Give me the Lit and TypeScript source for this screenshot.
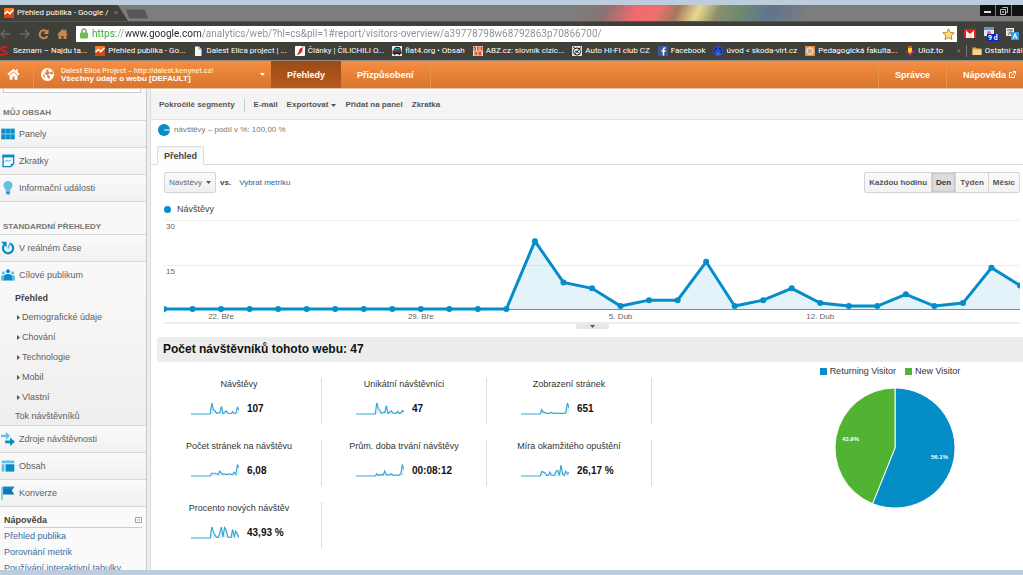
import { LitElement, html, svg, css } from "lit";
import { customElement, property, state } from "lit/decorators.js";
import { classMap } from "lit/directives/class-map.js";

const VISITS = [0, 0, 0, 0, 0, 0, 0, 0, 0, 0, 0, 0, 0, 23, 9, 7, 1, 3, 3, 16, 1, 3, 7, 2, 1, 1, 5, 1, 2, 14, 8];
const ZEROS = [0, 0, 0, 0, 0, 0, 0, 0, 0, 0, 0, 0];

const base = css`
  *,
  *::before,
  *::after {
    box-sizing: border-box;
  }
  a {
    color: inherit;
    text-decoration: none;
  }
  button,
  input,
  select {
    font: inherit;
    color: inherit;
    margin: 0;
    padding: 0;
    border: 0;
    background: none;
    border-radius: 0;
  }
  svg {
    display: block;
    flex: none;
  }
`;

const ICONS: Record<string, unknown> = {
  analytics: svg`<rect width="20" height="20" rx="1" fill="#f47a1f"/><path d="M0 12 6 7l5 4 9-8v17H0z" fill="#d8480f"/><path d="M1 12.500 6.500 7l5 4.500L19 4" fill="none" stroke="#fff" stroke-width="3"/>`,
  seznam: svg`<path d="M14 2C7 2 2 3 2 6s10 3 11 7-5 4-13 5" fill="none" stroke="#e01818" stroke-width="4"/>`,
  file: svg`<path d="M4 1h8l5 5v14H4z" fill="#f4f4f4"/><path d="M12 1v5h5" fill="none" stroke="#888" stroke-width="1.500"/>`,
  chili: svg`<rect width="20" height="20" rx="2" fill="#fff"/><path d="M15 4c1 8-4 13-12 14 5-4 4-9 8-14z" fill="#d9202a"/><path d="M13 5c1-3 3-3 4-4" fill="none" stroke="#3c8a2e" stroke-width="2"/>`,
  car: svg`<rect width="20" height="20" fill="#e8e8e8"/><path d="M4 8 7 3h8l2 5z" fill="#1bb5bd" stroke="#222" stroke-width="2"/><path d="M1 9h18v7h-3v2h-3v-2H7v2H4v-2H1z" fill="#222"/><path d="M3 11h4v2H3zm10 0h4v2h-4z" fill="#e0204a"/><path d="M7 10h6v3H7z" fill="#b3123a"/>`,
  abz: svg`<rect width="20" height="20" fill="#f9dccb"/><path d="M1 1h5v8H1zm7 0h5v8H8zm7 0h4v8h-4zM3 11h6v8H3zm8 0h6v8h-6z" fill="#e5471b"/><path d="M3 4h1v3H3zm7-1h1v4h-1zM5 13h2v1H5zm0 3h2v1H5z" fill="#fff"/>`,
  hifi: svg`<rect width="20" height="20" fill="#ddd"/><circle cx="10" cy="11" r="7" fill="#fff" stroke="#222" stroke-width="2"/><path d="M2 2l6 4M18 3l-6 4M6 11h3M13 8l-2 3 3 4M6 15l3-2" stroke="#222" stroke-width="2" fill="none"/><circle cx="10" cy="11" r="2" fill="#222"/>`,
  facebook: svg`<rect width="20" height="20" fill="#3b5998"/><path d="M15 4h-2c-1.500 0-2 .8-2 2v13M7 10h8" fill="none" stroke="#fff" stroke-width="3"/>`,
  skoda: svg`<circle cx="10" cy="10" r="9" fill="#0c1e8c" stroke="#3558e8" stroke-width="2"/><path d="M10 2v15M6 7v6c0 2 8 2 8 0V7M4 16h12" fill="none" stroke="#4d78ff" stroke-width="2"/>`,
  pedag: svg`<rect width="20" height="20" fill="#e68a45"/><circle cx="10" cy="10" r="7.500" fill="#f2e4d4"/><path d="M5 8h10M5 12h10M8 5v10M12 5v10" stroke="#b7875d" stroke-width="1.500"/>`,
  uloz: svg`<path d="M10 3 19 11 10 20 1 11z" fill="#a01868"/><path d="M6 1h8v9h5l-9 9-9-9h5z" fill="#ffc928"/><path d="M6 1h8v3H6z" fill="#f0482c"/><path d="M1 10h4l5 6 5-6h4l-9 9z" fill="#a01868"/>`,
  folder: svg`<path d="M1 3h7l2 2h9v13H1z" fill="#d9a649"/><path d="M1 7h18v11H1z" fill="#f5d48a"/>`,
  home: svg`<path d="M1.500 10.500 10 3l8.500 7.500" fill="none" stroke="currentColor" stroke-width="3"/><path d="M4 11.500 10 6.500l6 5V18h-4.500v-5h-3v5H4zM14 2h2.500v5L14 5z" fill="currentColor"/>`,
  globe: svg`<circle cx="10" cy="10" r="10" fill="#fff"/><path d="M8 3l4-1-1 3 3 2 3-2 2 4-3 1-3-2-2 2 3 3-1 4-3-2-1-4-4-3 3-2z" fill="#e98140"/><path d="M3 9l3 3v4l-2-2z" fill="#e98140"/>`,
  panels: svg`<path d="M0 2h20v16H0z" fill="#62c2e2"/><path d="M1 3h5v6H1zm6.500 0h5v6h-5zM14 3h5v6h-5zM1 11h5v6H1zm6.500 0h5v6h-5zM14 11h5v6h-5z" fill="#058dc7"/>`,
  shortcut: svg`<path d="M3 2h15v12l-4 4H3z" fill="#fff" stroke="#0a8fc9" stroke-width="2"/><path d="M2 1h17v4H2z" fill="#0a8fc9"/><path d="M5 12l3-3 3 1.500L15 8" fill="none" stroke="#62c2e2" stroke-width="1.600"/><path d="M18 14h-4v4z" fill="#0a8fc9"/>`,
  bulb: svg`<path d="M10 0c4 0 6.500 3 6.500 6 0 3-3 4.500-3.500 8H7C6.500 10.500 3.500 9 3.500 6 3.500 3 6 0 10 0z" fill="#62c2e2"/><path d="M7 14.500h6v3L10.500 20 7 17.500z" fill="#2a97cb"/>`,
  realtime: svg`<path d="M13 3.500a7.300 7.300 0 1 1-8 1.500" fill="none" stroke="#058dc7" stroke-width="3.200"/><path d="M0 1h8v8z" fill="#058dc7"/><path d="M10 11l3-9" stroke="#62c2e2" stroke-width="2.400"/>`,
  audience: svg`<circle cx="3.500" cy="7" r="2.300" fill="#62c2e2"/><circle cx="16.500" cy="7" r="2.300" fill="#62c2e2"/><path d="M0 18v-6l2-2h4v8zm20 0v-6l-2-2h-4v8z" fill="#62c2e2"/><circle cx="10" cy="4.500" r="2.800" fill="#058dc7"/><path d="M4 18v-5l3-4.500h6l3 4.500v5z" fill="#058dc7"/>`,
  sources: svg`<path d="M0 4h7V0l6 5.500L7 11V7H0z" fill="#62c2e2"/><path d="M6 12h7V8l7 6-7 6v-4H6z" fill="#058dc7"/>`,
  content: svg`<path d="M1 2h18v4H1zM1 7.500h4V18H1z" fill="#62c2e2"/><path d="M6.500 7.500H19V18H6.500z" fill="#058dc7"/>`,
  flag: svg`<path d="M1.500 1v19" stroke="#62c2e2" stroke-width="2"/><path d="M3 1h16l-3.500 5.500L19 12H3z" fill="#1273b5"/><path d="M3 1h16l-3.500 4H3z" fill="#058dc7"/>`,
};

@customElement("ui-icon")
class UiIcon extends LitElement {
  static styles = css`
    :host {
      display: block;
      flex: none;
      width: 10px;
      height: 10px;
    }
    svg {
      display: block;
      width: 100%;
      height: 100%;
    }
  `;
  @property() name = "file";
  render() {
    return html`<svg viewBox="0 0 20 20" aria-hidden="true">${ICONS[this.name]}</svg>`;
  }
}

const BOOKMARKS = [
  ["seznam", "Seznam – Najdu ta..."],
  ["analytics", "Přehled publika - Go..."],
  ["file", "Dalest Elica project | ..."],
  ["chili", "Články | ČILICHILI O..."],
  ["car", "flat4.org • Obsah"],
  ["abz", "ABZ.cz: slovník cizíc..."],
  ["hifi", "Auto HI-FI club CZ"],
  ["facebook", "Facebook"],
  ["skoda", "úvod < skoda-virt.cz"],
  ["pedag", "Pedagogická fakulta..."],
  ["uloz", "Ulož.to"],
];

@customElement("browser-chrome")
class BrowserChrome extends LitElement {
  static styles = [
    base,
    css`
      :host {
        display: block;
        font: 8px/12px Roboto, "Open Sans", sans-serif;
        color: #fff;
        background: #3f403a;
        border-bottom: 1px solid #8d8e8a;
      }
      .strip {
        display: flex;
        height: 17px;
        background: linear-gradient(
            115deg,
            transparent 56%,
            #8a7272 59%,
            #f06a6e 62%,
            #f0706e 64%,
            #a5785f 66%,
            #e8d890 68%,
            #8b8f6a 70%,
            #6f8a70 72%,
            #60748c 75%,
            transparent 79%
          )
          no-repeat #7d7d7d;
        border-bottom: 1px solid #55564f;
      }
      .tab {
        display: flex;
        align-items: center;
        gap: 3px;
        width: 128px;
        padding: 0 10px 0 4px;
        background: #3f403a;
        clip-path: polygon(0 0, 118px 0, 128px 100%, 0 100%);
      }
      .tab-title {
        flex: 1;
        overflow: hidden;
        white-space: nowrap;
        text-align: left;
      }
      .x {
        color: #85867f;
      }
      .newtab {
        width: 20px;
        height: 10px;
        margin: 4px 0 0 -1px;
        background: #575757;
        border: 1px solid #6a6a6a;
        border-radius: 2px;
        transform: skewX(20deg);
      }
      .win {
        display: flex;
        gap: 1px;
        margin-left: auto;
        height: 11px;
      }
      .win button {
        display: grid;
        place-items: center;
        width: 15px;
        height: 11px;
        background: #111;
      }
      .win button:last-child {
        width: 11px;
      }
      .bar {
        display: flex;
        align-items: center;
        gap: 7px;
        height: 21px;
        padding: 3px 4px 1px 0;
      }
      .nav {
        display: flex;
        align-items: center;
        gap: 8px;
        padding: 0 1px 0 0;
      }
      .nav button {
        display: block;
        width: 11px;
        height: 12px;
      }
      .omni {
        display: flex;
        flex: 1;
        align-items: center;
        gap: 4px;
        height: 16px;
        padding: 0 2px 0 4px;
        background: #fff;
      }
      .url {
        flex: 1;
        min-width: 0;
        height: 16px;
        font-size: 10px;
        line-height: 16px;
        color: transparent;
        background: linear-gradient(90deg, #2ba52b 24px, #999 24px 34px, #222 34px 110px, #8c8c8c 110px);
        -webkit-background-clip: text;
        background-clip: text;
      }
      .bookmarks {
        display: flex;
        align-items: center;
        height: 17px;
        padding-bottom: 1px;
        overflow: hidden;
        white-space: nowrap;
      }
      .bookmarks a {
        display: flex;
        align-items: center;
        gap: 3px;
        flex: none;
        margin-right: 8px;
      }
      .tail {
        display: flex;
        align-items: center;
        gap: 5px;
        margin-left: auto;
        width: 66px;
        flex: none;
      }
      .tail a {
        padding-left: 5px;
        border-left: 1px solid #77786f;
        margin: 0;
      }
      .more {
        color: #8e8f88;
      }
    `,
  ];
  render() {
    return html`
      <div class="strip">
        <button class="tab">
          <ui-icon name="analytics"></ui-icon>
          <span class="tab-title">Přehled publika - Google /</span>
          <span class="x">×</span>
        </button>
        <button class="newtab" aria-label="Nová karta"></button>
        <div class="win">
          <button aria-label="Minimalizovat"><svg width="7" height="7"><path d="M0 4h7v2H0z" fill="#ddd" /></svg></button>
          <button aria-label="Obnovit">
            <svg width="8" height="8" viewBox="0 0 8 8"><path d="M2.500.5h5v5h-2M.5 2.500h5v5h-5zM2.500 4.500h1v1h-1z" fill="none" stroke="#bbb" /></svg>
          </button>
          <button aria-label="Zavřít"></button>
        </div>
      </div>
      <div class="bar">
        <div class="nav">
          <button aria-label="Zpět"><svg width="11" height="12" viewBox="0 0 11 12"><path d="M10 6H1M5 2 1 6l4 4" fill="none" stroke="#686963" stroke-width="1.500" /></svg></button>
          <button aria-label="Vpřed"><svg width="11" height="12" viewBox="0 0 11 12"><path d="M1 6h9M6 2l4 4-4 4" fill="none" stroke="#686963" stroke-width="1.500" /></svg></button>
          <button aria-label="Obnovit"><svg width="11" height="12" viewBox="0 0 11 12"><path d="M8.500 3.500A4 4 0 1 0 9.300 8" fill="none" stroke="#d0854d" stroke-width="2" /><path d="M10.500 1v5h-5z" fill="#d0854d" /></svg></button>
          <button aria-label="Domů"><svg width="11" height="12" viewBox="0 0 11 12"><path d="M0 6.500 5.500 1l2 2V1.500h1.800v3.300L11 6.500H9.500V11h-3V8h-2v3h-3V6.500z" fill="#d0854d" /></svg></button>
        </div>
        <div class="omni">
          <svg width="8" height="11" viewBox="0 0 8 11"><path d="M2 5V3a2 2 0 0 1 4 0v2" fill="none" stroke="#8b8f8b" stroke-width="1.400" /><rect y="4.500" width="8" height="6" rx="1" fill="#6cc04a" /></svg>
          <input class="url" aria-label="Adresa" value="https://www.google.com/analytics/web/?hl=cs&pli=1#report/visitors-overview/a39778798w68792863p70866700/" />
          <svg width="13" height="12" viewBox="0 0 13 12"><path d="m6.500.8 1.700 3.600 4 .5-3 2.700.8 3.900-3.500-2-3.500 2 .8-3.900-3-2.700 4-.5z" fill="#fbe07a" stroke="#b58d3a" /></svg>
        </div>
        <svg width="12" height="9" viewBox="0 0 12 9"><rect width="12" height="9" fill="#e02020" /><path d="M2 9V1.500L6 5l4-3.500V9z" fill="#fff" /><path d="M3.500 9V4.500L6 6.500l2.500-2V9z" fill="#e02020" opacity=".15" /></svg>
        <svg width="16" height="14" viewBox="0 0 16 14"><path d="M1 1h10v8H1z" fill="#dce8f6" /><path d="M1 0h10v3H1z" fill="#6a94c8" /><circle cx="6" cy="6" r="2" fill="#e26a6a" /><rect x="4" y="7" width="12" height="7" fill="#1420b8" /><text x="5" y="13" font-size="7" font-weight="700" fill="#fff">9 d</text></svg>
        <svg width="13" height="12" viewBox="0 0 13 12"><rect width="8" height="8" fill="#e9ece9" /><path d="M1 2h6M4 1v1M2 7l4-5M2.500 4 6 7" stroke="#666" fill="none" /><rect x="5" y="4" width="8" height="8" fill="#2f9be0" /><path d="m7 11 2-5.500L11 11M8 9h2" fill="none" stroke="#fff" /></svg>
      </div>
      <nav class="bookmarks">
        ${BOOKMARKS.map(([i, t]) => html`<a href="#"><ui-icon name=${i}></ui-icon>${t}</a>`)}
        <div class="tail"><span class="more">»</span><a href="#"><ui-icon name="folder"></ui-icon>Ostatní zál</a></div>
      </nav>
    `;
  }
}

@customElement("ga-header")
class GaHeader extends LitElement {
  static styles = [
    base,
    css`
      :host {
        display: flex;
        height: 27px;
        flex: none;
        color: #fff;
        font: bold 9px/12px "Liberation Sans", Arial, sans-serif;
        background: linear-gradient(#f68d42, #d8752f);
        border-bottom: 1px solid #e9c3a6;
      }
      a,
      button {
        display: flex;
        align-items: center;
        justify-content: center;
      }
      .home {
        width: 34px;
        padding-right: 7px;
        border-right: 1px solid #ea914f;
      }
      .home ui-icon {
        width: 13px;
        height: 13px;
      }
      .profile {
        width: 237px;
        gap: 7px;
        padding: 0 6px 0 7px;
        text-align: left;
      }
      .profile ui-icon {
        width: 13px;
        height: 13px;
      }
      .names {
        flex: 1;
        font-size: 8px;
        line-height: 8px;
      }
      .names small {
        display: block;
        font-size: 7px;
        line-height: 8px;
        color: #ffe6b8;
      }
      .item {
        padding: 0 16px;
        border-right: 1px solid #ea914f;
      }
      .active {
        background: linear-gradient(#9c4a14, #b85a1e);
        border-right: 0;
      }
      .right {
        margin-left: auto;
        border-left: 1px solid #ea914f;
        border-right: 0;
      }
      .help {
        gap: 3px;
        padding: 0 7px 0 16px;
        border-left: 1px solid #ea914f;
        border-right: 0;
      }
    `,
  ];
  render() {
    return html`
      <a class="home" href="#" aria-label="Domů"><ui-icon name="home"></ui-icon></a>
      <button class="profile">
        <ui-icon name="globe"></ui-icon>
        <span class="names"><small>Dalest Elica Project – http://dalest.kenynet.cz/</small>Všechny údaje o webu [DEFAULT]</span>
        <svg width="5" height="3"><path d="M0 0h5L2.500 3z" fill="#fff" /></svg>
      </button>
      <a class="item active" href="#">Přehledy</a>
      <a class="item" href="#">Přizpůsobení</a>
      <a class="item right" href="#">Správce</a>
      <a class="help" href="#">Nápověda<svg width="7" height="7" viewBox="0 0 7 7"><path d="M3 1.500H.5v5h5V4M2.500 4.500l3.500-4M4 .5h2.500V3" fill="none" stroke="#fff" /></svg></a>
    `;
  }
}

@customElement("ga-sidebar")
class GaSidebar extends LitElement {
  static styles = [
    base,
    css`
      :host {
        display: block;
        overflow: hidden;
        color: #606060;
        background: #f8f8f8;
        font: 9px/12px "Liberation Sans", Arial, sans-serif;
        white-space: nowrap;
      }
      .search {
        display: flex;
        align-items: flex-end;
        height: 4px;
        padding: 0 5px 0 3px;
        overflow: hidden;
      }
      .search input {
        width: 100%;
        height: 18px;
        flex: none;
        background: #fff;
        border: 1px solid #ccc;
      }
      h2 {
        margin: 0;
        padding: 13px 3px 1px;
        font-size: 8px;
        line-height: 13px;
        font-weight: bold;
        color: #777;
      }
      h2.second {
        padding-top: 18px;
        border-top: 1px solid #d8d8d8;
      }
      .row {
        display: flex;
        align-items: center;
        gap: 4px;
        height: 27px;
        padding-left: 1px;
        border-top: 1px solid #d8d8d8;
        background: linear-gradient(#fafafa, #f1f1f1);
      }
      .row.open {
        background: #f8f8f8;
      }
      .row ui-icon {
        width: 14px;
        height: 14px;
      }
      .sub {
        display: flex;
        flex-direction: column;
        padding-top: 1px;
        background: linear-gradient(#f8f8f8, #eee);
      }
      .sub a {
        line-height: 20px;
      }
      .sub .leaf {
        line-height: 18px;
        padding-left: 15px;
      }
      .sub .branch {
        display: flex;
        align-items: center;
        gap: 2px;
        padding-left: 17px;
      }
      .current {
        font-weight: bold;
        color: #444;
      }
      .help {
        padding: 7px 4px 0;
        border-top: 1px solid #d8d8d8;
        background: #fafafa;
        color: #3b6e9e;
        display: flex;
        flex-direction: column;
        line-height: 16px;
      }
      .help h3 {
        display: flex;
        justify-content: space-between;
        align-items: center;
        margin: 0;
        padding-bottom: 1px;
        font-size: 9px;
        line-height: 12px;
        color: #444;
        border-bottom: 1px solid #ccc;
      }
    `,
  ];
  row(icon: string, text: string, open = false) {
    return html`<a href="#" class=${classMap({ row: true, open })}><ui-icon name=${icon}></ui-icon>${text}</a>`;
  }
  render() {
    return html`
      <div class="search"><input type="search" aria-label="Najít přehledy" /></div>
      <h2>MŮJ OBSAH</h2>
      ${this.row("panels", "Panely")} ${this.row("shortcut", "Zkratky")} ${this.row("bulb", "Informační události")}
      <h2 class="second">STANDARDNÍ PŘEHLEDY</h2>
      ${this.row("realtime", "V reálném čase")} ${this.row("audience", "Cílové publikum", true)}
      <div class="sub">
        <a class="leaf current" href="#">Přehled</a>
        ${["Demografické údaje", "Chování", "Technologie", "Mobil", "Vlastní"].map(
          (t) => html`<a class="branch" href="#"><svg width="3" height="5"><path d="M0 0 3 2.500 0 5z" fill="#555" /></svg>${t}</a>`
        )}
        <a class="leaf" href="#">Tok návštěvníků</a>
      </div>
      ${this.row("sources", "Zdroje návštěvnosti")} ${this.row("content", "Obsah")} ${this.row("flag", "Konverze")}
      <div class="help">
        <h3>Nápověda<svg width="7" height="6"><path d="M.5.5h6v5h-6z" fill="#fff" stroke="#9aa5b1" /><path d="M2 3h3" stroke="#9aa5b1" /></svg></h3>
        <a href="#">Přehled publika</a>
        <a href="#">Porovnání metrik</a>
        <a href="#">Používání interaktivní tabulky</a>
      </div>
    `;
  }
}

@customElement("visits-chart")
class VisitsChart extends LitElement {
  static styles = [
    base,
    css`
      :host {
        display: block;
        color: #666;
        font: 8px/12px "Liberation Sans", Arial, sans-serif;
      }
      .plot {
        display: grid;
        grid-template-rows: 45px 44px 3px;
      }
      .plot > * {
        grid-column: 1;
      }
      .tick {
        border-top: 1px solid #eee;
        padding-left: 2px;
      }
      .r1 {
        grid-row: 1;
      }
      .r2 {
        grid-row: 2;
      }
      .lines {
        grid-row: 1 / 4;
        width: 100%;
        height: 92px;
      }
      .dates {
        display: grid;
        grid-template-columns: repeat(60, 1fr);
        height: 10px;
        line-height: 10px;
      }
      .dates span {
        display: flex;
        justify-content: center;
        white-space: nowrap;
        grid-row: 1;
      }
      .d1 {
        grid-column: 4 / 6;
      }
      .d2 {
        grid-column: 18 / 20;
      }
      .d3 {
        grid-column: 32 / 34;
      }
      .d4 {
        grid-column: 46 / 48;
      }
      .foot {
        display: flex;
        justify-content: center;
        border-top: 2px solid #ececec;
      }
      .handle {
        display: grid;
        place-items: center;
        width: 33px;
        height: 5px;
        background: #e6e6e6;
        border-radius: 0 0 2px 2px;
      }
      .area {
        fill: #058dc7;
        fill-opacity: 0.11;
      }
      .line {
        fill: none;
        stroke: #058dc7;
        stroke-width: 3px;
      }
      .dot {
        stroke: #058dc7;
        stroke-width: 6px;
        stroke-linecap: round;
      }
      .axis {
        stroke: #888;
      }
    `,
  ];
  render() {
    const pts = VISITS.map((v, i) => [(i * 100) / (VISITS.length - 1), 89 - v * 2.95]);
    const line = pts.map((p) => p.join(",")).join(" ");
    return html`
      <div class="plot">
        <div class="tick r1">30</div>
        <div class="tick r2">15</div>
        <svg class="lines" viewBox="0 0 100 92" preserveAspectRatio="none" role="img" aria-label="Návštěvy">
          <polygon class="area" points="0,89 ${line} 100,89" />
          <path class="axis" d="M0 89.500H100" vector-effect="non-scaling-stroke" />
          <polyline class="line" points=${line} vector-effect="non-scaling-stroke" />
          ${pts.map((p) => svg`<path class="dot" d="M${p[0]} ${p[1]}h0.001" vector-effect="non-scaling-stroke"/>`)}
        </svg>
      </div>
      <div class="dates">
        <span class="d1">22. Bře</span><span class="d2">29. Bře</span><span class="d3">5. Dub</span><span class="d4">12. Dub</span>
      </div>
      <div class="foot">
        <button class="handle" aria-label="Poznámky"><svg width="5" height="3"><path d="M0 0h5L2.500 3z" fill="#555" /></svg></button>
      </div>
    `;
  }
}

const METRICS: { label: string; value: string; data: number[] }[] = [
  { label: "Návštěvy", value: "107", data: VISITS },
  { label: "Unikátní návštěvníci", value: "47", data: [...ZEROS, 0, 20, 9, 6, 1, 3, 3, 15, 1, 3, 6, 2, 1, 1, 5, 1, 2, 6, 4] },
  { label: "Zobrazení stránek", value: "651", data: [...ZEROS, 0, 8, 3, 3, 1, 1, 1, 3, 1, 1, 2, 1, 1, 1, 1, 1, 3, 20, 11] },
  { label: "Počet stránek na návštěvu", value: "6,08", data: [...ZEROS, 0, 5, 5, 5, 4, 3, 9, 5, 3, 4, 3, 3, 4, 3, 3, 7, 3, 20, 15] },
  { label: "Prům. doba trvání návštěvy", value: "00:08:12", data: [...ZEROS, 0, 4, 1, 2, 3, 2, 9, 2, 2, 2, 4, 2, 1, 2, 1, 2, 4, 20, 12] },
  { label: "Míra okamžitého opuštění", value: "26,17 %", data: [...ZEROS, 0, 8, 7, 6, 1, 1, 7, 2, 1, 2, 9, 10, 1, 20, 4, 1, 9, 4, 7] },
  { label: "Procento nových návštěv", value: "43,93 %", data: [...ZEROS, 0, 19, 11, 5, 1, 1, 9, 19, 2, 18, 14, 2, 1, 1, 15, 3, 12, 7, 1] },
];

@customElement("metric-card")
class MetricCard extends LitElement {
  static styles = [
    base,
    css`
      :host {
        display: flex;
        flex-direction: column;
        align-items: stretch;
        height: 46px;
        border-right: 1px solid #ddd;
        color: #333;
        font: 9px/12px "Liberation Sans", Arial, sans-serif;
      }
      .label {
        text-align: center;
      }
      .data {
        display: flex;
        align-items: center;
        gap: 8px;
        padding: 12px 0 0 34px;
      }
      b {
        font-size: 10px;
        line-height: 12px;
        color: #111;
      }
    `,
  ];
  @property() label = "";
  @property() value = "";
  @property({ attribute: false }) data: number[] = [];
  render() {
    const max = Math.max(...this.data);
    const line = this.data.map((v, i) => `${(i * 48) / 30},${12 - (v / max) * 11}`).join(" ");
    return html`
      <span class="label">${this.label}</span>
      <div class="data">
        <svg width="48" height="13" aria-hidden="true">
          <polygon points="0,12 ${line} 48,12" fill="#dff0f9" />
          <polyline points=${line} fill="none" stroke="#3aa6d4" stroke-width="1.200" />
        </svg>
        <b>${this.value}</b>
      </div>
    `;
  }
}

@customElement("visitor-pie")
class VisitorPie extends LitElement {
  static styles = [
    base,
    css`
      :host {
        display: flex;
        flex-direction: column;
        align-items: center;
        gap: 10px;
        color: #333;
        font: 9px/12px "Liberation Sans", Arial, sans-serif;
      }
      .legend {
        display: flex;
        gap: 9px;
        padding-right: 10px;
      }
      .legend span {
        display: flex;
        align-items: center;
        gap: 3px;
      }
      .legend i {
        width: 7px;
        height: 7px;
      }
      .blue {
        background: #058dc7;
      }
      .green {
        background: #50b432;
      }
    `,
  ];
  render() {
    const a = 0.561 * 2 * Math.PI;
    const x = 61 + 60 * Math.sin(a);
    const y = 61 - 60 * Math.cos(a);
    return html`
      <div class="legend">
        <span><i class="blue"></i>Returning Visitor</span><span><i class="green"></i>New Visitor</span>
      </div>
      <svg width="122" height="122" role="img" aria-label="Returning Visitor, New Visitor">
        <path d="M61 61V1A60 60 0 1 1 ${x} ${y}z" fill="#058dc7" stroke="#fff" />
        <path d="M61 61 ${x} ${y}A60 60 0 0 1 61 1z" fill="#50b432" stroke="#fff" />
        <text x="97" y="72" font-size="6" font-weight="700" fill="#fff">56.1%</text>
        <text x="8" y="54" font-size="6" font-weight="700" fill="#fff">43.9%</text>
      </svg>
    `;
  }
}

@customElement("ga-report")
class GaReport extends LitElement {
  static styles = [
    base,
    css`
      :host {
        display: block;
        min-width: 0;
        overflow: hidden;
        background: #fff;
        color: #444;
        font: 8px/12px "Liberation Sans", Arial, sans-serif;
      }
      .tools {
        display: flex;
        align-items: center;
        gap: 9px;
        height: 31px;
        padding: 0 8px;
        font-weight: bold;
        color: #555;
        background: #f4f4f4;
        border-top: 2px solid #fff;
        border-bottom: 1px solid #e2e2e2;
      }
      .tools .export {
        display: flex;
        align-items: center;
        gap: 3px;
      }
      .sep {
        width: 1px;
        height: 13px;
        background: #ccc;
      }
      .share {
        display: flex;
        align-items: center;
        gap: 4px;
        height: 20px;
        padding-left: 7px;
        color: #777;
      }
      .tabs {
        display: flex;
        padding: 6px 6px 0;
        border-bottom: 1px solid #dcdcdc;
      }
      .tab {
        height: 19px;
        margin-bottom: -1px;
        padding: 0 6px;
        font-size: 9px;
        font-weight: bold;
        background: linear-gradient(#f4f4f4, #fff);
        border: 1px solid #dcdcdc;
        border-bottom-color: #fff;
        border-radius: 2px 2px 0 0;
      }
      .controls {
        display: flex;
        align-items: center;
        gap: 4px;
        padding: 7px 3px 0 13px;
      }
      .pick {
        display: grid;
        align-items: center;
        justify-items: end;
      }
      .pick > * {
        grid-area: 1 / 1;
      }
      .pick svg {
        margin-right: 5px;
        pointer-events: none;
      }
      select {
        appearance: none;
        width: 52px;
        height: 21px;
        padding-left: 4px;
        border: 1px solid #d4d4d4;
        border-radius: 2px;
        background: linear-gradient(#fafafa, #f0f0f0);
        color: #666;
      }
      .vs {
        font-weight: bold;
      }
      .metric {
        margin-left: 4px;
        color: #1a6aa8;
      }
      .range {
        display: flex;
        margin-left: auto;
        border: 1px solid #d4d4d4;
        border-radius: 2px;
        background: linear-gradient(#fafafa, #f2f2f2);
      }
      .range button {
        height: 19px;
        padding: 0 4px;
        font-weight: bold;
        color: #555;
        border-left: 1px solid #d4d4d4;
      }
      .range button:first-child {
        border-left: 0;
      }
      .range .on {
        background: #ddd;
        color: #333;
        box-shadow: inset 0 0 2px #999;
      }
      .legend {
        display: flex;
        align-items: center;
        gap: 6px;
        padding: 10px 13px 5px;
        font-size: 9px;
      }
      .legend i {
        width: 7px;
        height: 7px;
        border-radius: 50%;
        background: #058dc7;
      }
      visits-chart {
        margin: 0 3px 0 13px;
      }
      h1 {
        margin: 8px 0 0 6px;
        padding: 0 6px;
        font-size: 12px;
        line-height: 25px;
        color: #111;
        background: #ededed;
        border-radius: 3px 0 0 3px;
      }
      .summary {
        display: flex;
        justify-content: space-between;
        align-items: flex-start;
        padding: 3px 0 0 6px;
      }
      .cards {
        display: grid;
        grid-template-columns: repeat(3, 165px);
        gap: 16px 0;
        padding-top: 13px;
      }
      visitor-pie {
        width: 256px;
      }
    `,
  ];
  @state() range = "Den";
  render() {
    return html`
      <div class="tools">
        <a href="#">Pokročilé segmenty</a><span class="sep"></span><a href="#">E-mail</a>
        <a class="export" href="#">Exportovat<svg width="5" height="3"><path d="M0 0h5L2.500 3z" fill="#555" /></svg></a>
        <a href="#">Přidat na panel</a><a href="#">Zkratka</a>
      </div>
      <div class="share">
        <svg width="12" height="12"><circle cx="6" cy="6" r="6" fill="#058dc7" /><path d="M6 6h6" stroke="#fff" /></svg>
        návštěvy – podíl v %: 100,00 %
      </div>
      <div class="tabs"><button class="tab">Přehled</button></div>
      <div class="controls">
        <span class="pick">
          <select aria-label="Metrika"><option>Návštěvy</option></select>
          <svg width="5" height="3"><path d="M0 0h5L2.500 3z" fill="#555" /></svg>
        </span>
        <span class="vs">vs.</span>
        <a class="metric" href="#">Vybrat metriku</a>
        <div class="range">
          ${["Každou hodinu", "Den", "Týden", "Měsíc"].map(
            (r) => html`<button class=${classMap({ on: r === this.range })} @click=${() => (this.range = r)}>${r}</button>`
          )}
        </div>
      </div>
      <div class="legend"><i></i>Návštěvy</div>
      <visits-chart></visits-chart>
      <h1>Počet návštěvníků tohoto webu: 47</h1>
      <div class="summary">
        <div class="cards">
          ${METRICS.map((m) => html`<metric-card .label=${m.label} .value=${m.value} .data=${m.data}></metric-card>`)}
        </div>
        <visitor-pie></visitor-pie>
      </div>
    `;
  }
}

@customElement("app-root")
class AppRoot extends LitElement {
  static styles = css`
    :host {
      display: flex;
      flex-direction: column;
      box-sizing: border-box;
      height: 100vh;
      overflow: hidden;
      border-top: 5px solid #becddb;
      border-bottom: 5px solid #becddb;
      background: #fff;
    }
    .body {
      display: grid;
      grid-template-columns: 146px 5px minmax(0, 1fr);
      flex: 1;
      min-height: 0;
    }
    .edge {
      background: #eee;
      border-left: 1px solid #c8c8c8;
      border-right: 1px solid #dadada;
    }
  `;
  render() {
    return html`
      <browser-chrome></browser-chrome>
      <ga-header></ga-header>
      <div class="body">
        <ga-sidebar></ga-sidebar>
        <div class="edge"></div>
        <ga-report></ga-report>
      </div>
    `;
  }
}
